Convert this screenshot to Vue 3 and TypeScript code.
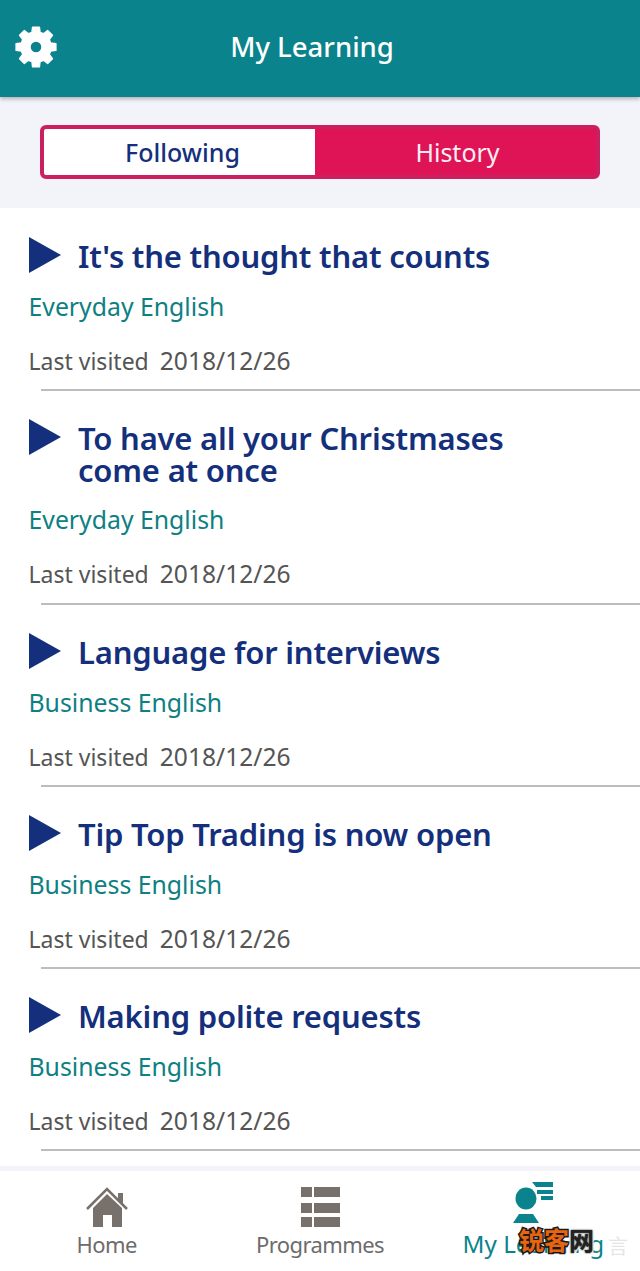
<script setup lang="ts">
type Lesson = {
  title: string[];
  category: string;
  visited: string;
};

const lessons: Lesson[] = [
  { title: ["It's the thought that counts"], category: 'Everyday English', visited: '2018/12/26' },
  { title: ['To have all your Christmases', 'come at once'], category: 'Everyday English', visited: '2018/12/26' },
  { title: ['Language for interviews'], category: 'Business English', visited: '2018/12/26' },
  { title: ['Tip Top Trading is now open'], category: 'Business English', visited: '2018/12/26' },
  { title: ['Making polite requests'], category: 'Business English', visited: '2018/12/26' },
];

// eight chunky teeth round the centre of a 44 box
const gearPath = (() => {
  const points: string[] = [];
  for (let i = 0; i < 8; i++) {
    const mid = (i * Math.PI) / 4;
    const corners: [number, number][] = [
      [15.2, mid - 0.27],
      [20.2, mid - 0.17],
      [20.2, mid + 0.17],
      [15.2, mid + 0.27],
    ];
    for (const [r, a] of corners) {
      points.push(`${(22 + r * Math.sin(a)).toFixed(2)} ${(22 - r * Math.cos(a)).toFixed(2)}`);
    }
  }
  return `M${points.join('L')}zM22 16a6 6 0 1 0 0 12 6 6 0 0 0 0-12z`;
})();
</script>

<template>
  <div class="screen">
    <header class="top-bar">
      <svg class="gear" viewBox="0 0 44 44" aria-hidden="true">
        <path fill-rule="evenodd" stroke="#fff" stroke-width="1.400" stroke-linejoin="round" :d="gearPath" />
      </svg>
      <h1 class="page-title">My Learning</h1>
    </header>

    <div class="switch-wrap">
      <div class="switch">
        <button type="button" class="switch-btn active">Following</button>
        <button type="button" class="switch-btn">History</button>
      </div>
    </div>

    <ul class="lessons">
      <li v-for="lesson in lessons" :key="lesson.title[0]" class="lesson">
        <div class="lesson-head">
          <svg class="play" viewBox="0 0 32 36" aria-hidden="true"><path d="M0 0 32 18 0 36z" /></svg>
          <h2 class="lesson-title">
            <span v-for="line in lesson.title" :key="line" class="title-line">{{ line }}</span>
          </h2>
        </div>
        <p class="lesson-cat">{{ lesson.category }}</p>
        <p class="lesson-date"><span class="date-label">Last visited</span><span>{{ lesson.visited }}</span></p>
      </li>
    </ul>

    <div class="spacer"></div>

    <nav class="tabs">
      <a class="tab">
        <svg class="tab-icon" viewBox="0 0 42 42" aria-hidden="true">
          <path d="M21 7 7 21v19h10V28h9v12h10V21z" fill="#77706b" />
          <path d="M1 22 21 2l20 20" fill="none" stroke="#77706b" stroke-width="2.500" />
          <path d="M32 6h5v13l-5-5z" fill="#77706b" />
        </svg>
        <span>Home</span>
      </a>
      <a class="tab">
        <svg class="tab-icon" viewBox="0 0 40 42" aria-hidden="true">
          <path
            d="M1 0h11v10H1zM14 0h26v10H14zM1 16h11v10H1zM14 16h26v10H14zM1 30h11v10H1zM14 30h26v10H14z"
            fill="#77706b"
          />
        </svg>
        <span>Programmes</span>
      </a>
      <a class="tab current">
        <svg class="tab-icon" viewBox="0 0 42 42" aria-hidden="true">
          <ellipse cx="14" cy="16.500" rx="10.500" ry="11" fill="#0b838c" />
          <path d="M7 32h14l6 9H1z" fill="#0b838c" />
          <path d="M20 0h21v5H24zM25 8h16v4H25zM29 14h12v4H29z" fill="#0b838c" />
        </svg>
        <span>My Learning</span>
      </a>
    </nav>

    <div class="watermark">
      <span class="mark-orange">锐客</span><span class="mark-white">网</span>
    </div>
    <div class="ghost">言</div>
  </div>
</template>

<style>
html,
body {
  margin: 0;
  background: #fff;
}
</style>

<style scoped>
.screen {
  position: relative;
  display: flex;
  flex-direction: column;
  width: 640px;
  height: 1271px;
  overflow: hidden;
  background: #fff;
  font-family: 'Noto Sans', 'Open Sans', sans-serif;
}

.top-bar {
  position: relative;
  z-index: 1;
  display: flex;
  align-items: center;
  justify-content: center;
  height: 97px;
  flex: none;
  box-sizing: border-box;
  padding: 0 16px 4px 0;
  background: #0a838c;
  box-shadow: 0 2px 4px rgba(0, 0, 0, 0.28);
}

.gear {
  position: absolute;
  left: 13.500px;
  top: 25px;
  width: 44px;
  height: 44px;
  fill: #fff;
}

.page-title {
  margin: 0;
  color: #fff;
  font-size: 27.500px;
  font-weight: 500;
  line-height: 1;
}

.switch-wrap {
  flex: none;
  height: 111px;
  box-sizing: border-box;
  padding: 28px 40px 0;
  background: #f3f4f9;
}

.switch {
  display: grid;
  grid-template-columns: 271px 1fr;
  height: 54px;
  box-sizing: border-box;
  border: 4px solid #c9215f;
  border-radius: 6px;
  background: #de1456;
  overflow: hidden;
}

.switch-btn {
  border: 0;
  padding: 0 0 0 4px;
  background: #de1456;
  color: #fbeef3;
  font: 400 25px 'Noto Sans', sans-serif;
}

.switch-btn.active {
  padding-left: 6px;
  background: #fff;
  color: #142f7c;
  font-weight: 500;
}

.lessons {
  margin: 0;
  padding: 0;
  list-style: none;
  flex: none;
}

.lesson {
  position: relative;
  padding: 29px 0 0 29px;
  height: 182px;
  box-sizing: border-box;
}

.lesson:nth-child(2) {
  height: 214px;
}

.lesson::after {
  content: '';
  position: absolute;
  left: 41px;
  right: 0;
  bottom: -1px;
  height: 2px;
  background: #bdbdbd;
}

.lesson-head {
  display: flex;
  gap: 17px;
}

.play {
  flex: none;
  width: 32px;
  height: 36px;
  fill: #142f7c;
}

.lesson-title {
  margin: 0;
  color: #142f7c;
  font-size: 31px;
  font-weight: 600;
  letter-spacing: -0.200px;
  line-height: 32px;
  padding-top: 3px;
}

.title-line {
  display: block;
}

.lesson-cat {
  margin: 17px 0 0 -0.500px;
  color: #0e7f83;
  font-size: 24.800px;
  line-height: 32px;
}

.lesson-date {
  display: flex;
  align-items: baseline;
  gap: 11px;
  margin: 23px 0 0 -0.500px;
  color: #555;
  font-size: 24.600px;
  line-height: 32px;
}

.date-label {
  font-size: 23px;
}

.spacer {
  flex: 1;
  background: #fff;
}

.tabs {
  display: grid;
  grid-template-columns: repeat(3, 1fr);
  flex: none;
  height: 100px;
  border-top: 5px solid #f3f4f9;
  background: #fff;
}

.tab {
  display: flex;
  flex-direction: column;
  align-items: center;
  padding-top: 16px;
  color: #6c6c6c;
  font-size: 22px;
  letter-spacing: -0.600px;
  line-height: 32px;
}

.tab-icon {
  width: 42px;
  height: 42px;
  margin-bottom: -1px;
}

.tab.current {
  padding-top: 11px;
  color: #0b838c;
  font-size: 24.200px;
  letter-spacing: 0;
}

.tab.current .tab-icon {
  margin-bottom: 4px;
}

.watermark {
  position: absolute;
  left: 519px;
  top: 1222px;
  font: 700 25px/1.400 'Noto Sans CJK SC', sans-serif;
  white-space: nowrap;
}

.mark-orange {
  color: #e8640f;
  -webkit-text-stroke: 3px #1a1a1a;
  paint-order: stroke fill;
}

.mark-white {
  color: #222;
  -webkit-text-stroke: 3px #fff;
  paint-order: stroke fill;
  text-shadow: 0 0 2px #222;
}

.ghost {
  position: absolute;
  left: 608px;
  top: 1234px;
  color: #e4e6e6;
  font: 400 20px/1.200 'Noto Sans CJK SC', sans-serif;
}
</style>
